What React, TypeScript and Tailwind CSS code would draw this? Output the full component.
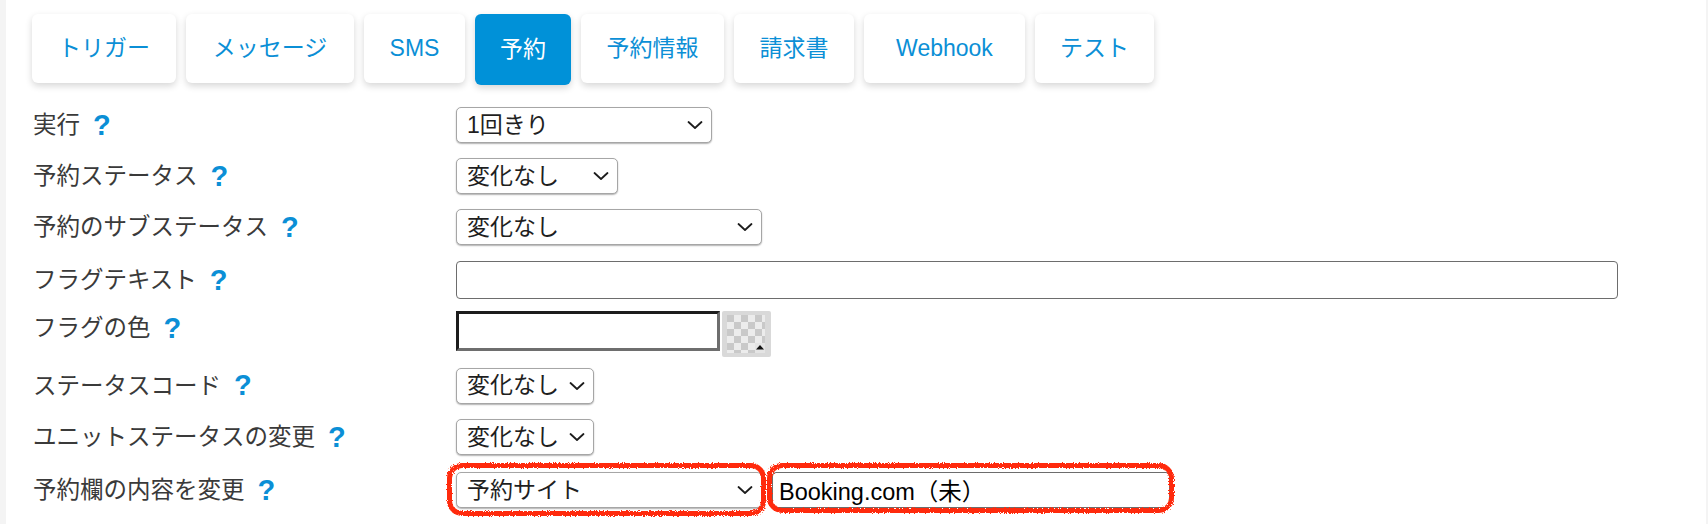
import React from 'react'

const font = "font-['Liberation_Sans','Noto_Sans_CJK_JP',sans-serif]"

const tabs = [
  { label: 'トリガー', w: 'w-[144px]' },
  { label: 'メッセージ', w: 'w-[168px]' },
  { label: 'SMS', w: 'w-[101px]' },
  { label: '予約', w: 'w-[96px]', active: true },
  { label: '予約情報', w: 'w-[143px]' },
  { label: '請求書', w: 'w-[120px]' },
  { label: 'Webhook', w: 'w-[161px]' },
  { label: 'テスト', w: 'w-[119px]' },
]

function Chevron() {
  return (
    <svg width="16" height="9" viewBox="0 0 16 9" className="pointer-events-none absolute right-[9px] top-1/2 -translate-y-1/2">
      <path d="M1.5 1.5 L8 7.5 L14.5 1.5" fill="none" stroke="#1d1d1d" strokeWidth="1.8" strokeLinecap="round" strokeLinejoin="round" />
    </svg>
  )
}

function Select({ value, w }: { value: string; w: string }) {
  return (
    <div className={`relative ${w} h-[36px]`}>
      <select
        defaultValue={value}
        className="h-full w-full appearance-none rounded-[5px] border border-[#a6a6a6] bg-white pl-[10px] text-[23px] leading-none text-[#1f1f1f] shadow-[0_1px_1.5px_rgba(0,0,0,0.3)] outline-none"
      >
        <option>{value}</option>
      </select>
      <Chevron />
    </div>
  )
}

function Help() {
  return <span className="ml-[13px] font-['Liberation_Sans',sans-serif] text-[29px] font-bold leading-none text-[#0b8fd6]">?</span>
}

function Label({ text }: { text: string }) {
  return (
    <div className="flex w-[423px] shrink-0 items-center text-[23.5px] leading-[30px] text-[#3a3a3a]">
      <span>{text}</span>
      <Help />
    </div>
  )
}

function Swatch() {
  return (
    <svg width="49" height="46" viewBox="0 0 49 46" className="ml-[2px] shrink-0">
      <defs>
        <pattern id="checker" x="5" y="4" width="14" height="14" patternUnits="userSpaceOnUse">
          <rect width="14" height="14" fill="#ececec" />
          <rect width="7" height="7" fill="#c9c9c9" />
          <rect x="7" y="7" width="7" height="7" fill="#c9c9c9" />
        </pattern>
      </defs>
      <rect width="49" height="46" rx="2" fill="#d9d9d9" />
      <rect x="5" y="4" width="38" height="38" fill="url(#checker)" />
      <rect x="33" y="32" width="10" height="10" fill="#e4e4e4" />
      <path d="M34 38.5 L38 34 L42 38.5 Z" fill="#111" />
    </svg>
  )
}

function Scribble({ pos }: { pos: string }) {
  return <span className={`pointer-events-none absolute ${pos} rounded-[15px] border-[5.5px] border-[#ff2a0a] [filter:url(#rough)]`} />
}

export default function App() {
  return (
    <div className={`flex h-[524px] w-full bg-white ${font}`}>
      <svg width="0" height="0" className="absolute">
        <filter id="rough">
          <feTurbulence type="fractalNoise" baseFrequency="1.2" numOctaves="2" result="n" />
          <feDisplacementMap in="SourceGraphic" in2="n" scale="4" />
        </filter>
      </svg>
      <div className="w-[6px] shrink-0 bg-[#f4f4f4]" />
      <main className="flex-1">
        <div className="ml-[26px] flex items-start gap-[10px] pt-[14px]">
          {tabs.map((t) => (
            <div
              key={t.label}
              className={`${t.w} flex items-center justify-center rounded-[6px] text-[23px] shadow-[0_3px_7px_rgba(0,0,0,0.16)] ${
                t.active ? 'h-[71px] bg-[#0091d8] text-white' : 'h-[69px] bg-white text-[#0b8fd6]'
              }`}
            >
              {t.label}
            </div>
          ))}
        </div>

        <div className="mt-[15px] pl-[27px]">
          <div className="flex h-[50px] items-center">
            <Label text="実行" />
            <Select value="1回きり" w="w-[256px]" />
          </div>
          <div className="flex h-[52px] items-center">
            <Label text="予約ステータス" />
            <Select value="変化なし" w="w-[162px]" />
          </div>
          <div className="flex h-[50px] items-center">
            <Label text="予約のサブステータス" />
            <Select value="変化なし" w="w-[306px]" />
          </div>
          <div className="flex h-[56px] items-center">
            <Label text="フラグテキスト" />
            <input className="h-[38px] w-[1162px] rounded-[4px] border-[1.5px] border-[#6d6d6d] bg-white outline-none" />
          </div>
          <div className="flex h-[53px] items-start pt-[3px]">
            <div className="pt-[2px]">
              <Label text="フラグの色" />
            </div>
            <input className="h-[40px] w-[264px] border-[3px] border-t-[#1c1c1c] border-l-[#1c1c1c] border-b-[#6e6e6e] border-r-[#6e6e6e] bg-white outline-none" />
            <Swatch />
          </div>
          <div className="flex h-[49px] items-center">
            <Label text="ステータスコード" />
            <Select value="変化なし" w="w-[138px]" />
          </div>
          <div className="flex h-[54px] items-center">
            <Label text="ユニットステータスの変更" />
            <Select value="変化なし" w="w-[138px]" />
          </div>
          <div className="flex h-[52px] items-center">
            <Label text="予約欄の内容を変更" />
            <div className="flex items-center gap-[10px]">
              <div className="relative">
                <Select value="予約サイト" w="w-[306px]" />
                <Scribble pos="-left-[9px] -top-[9px] -right-[4px] -bottom-[8px]" />
              </div>
              <div className="relative">
                <input
                  defaultValue="Booking.com（未）"
                  className="h-[36px] w-[398px] rounded-[4px] border-[1.5px] border-[#6d6d6d] bg-white pl-[6px] text-[23.5px] text-black outline-none"
                />
                <Scribble pos="-left-[5px] -top-[9px] -right-[4px] -bottom-[5px]" />
              </div>
            </div>
          </div>
        </div>
      </main>
      <div className="w-[2px] shrink-0 bg-[#f4f4f4]" />
    </div>
  )
}
